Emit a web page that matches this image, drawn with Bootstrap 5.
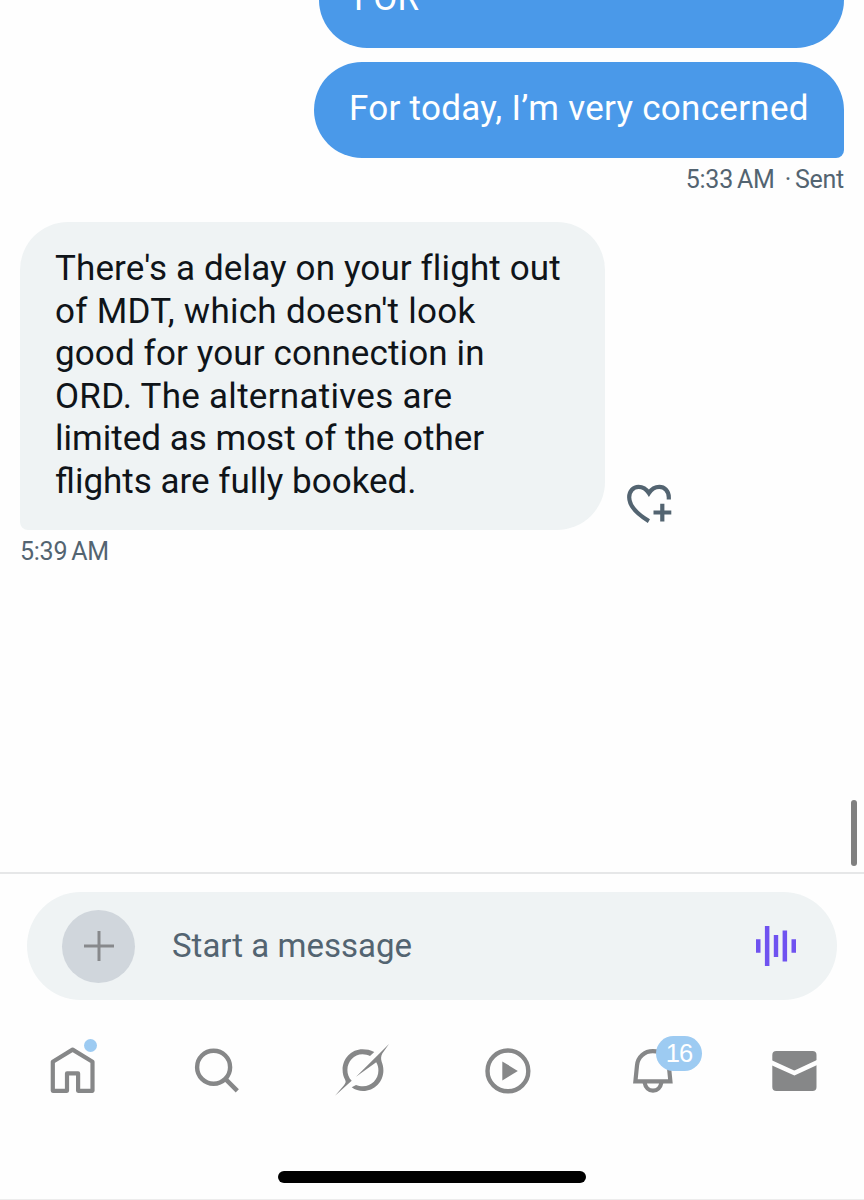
<!DOCTYPE html>
<html lang="en">
<head>
<meta charset="utf-8">
<meta name="viewport" content="width=device-width, initial-scale=1">
<title>Messages</title>
<link href="https://cdn.jsdelivr.net/npm/bootstrap@5.3.0/dist/css/bootstrap.min.css" rel="stylesheet">
<style>
  body { font-family: Roboto, "Liberation Sans", sans-serif; color: #0f1419; background: #fefefe; }
  .screen { width: 864px; height: 1200px; }
  .thread { height: 872px; padding: 0 20px; }
  .bubble { font-size: 35px; line-height: 42.55px; padding: 26px 35px 27.7px; border-radius: 48px; white-space: nowrap; }
  .bubble-out { background: #4a99e9; color: #fff; }
  .bubble-clipped { width: 525px; height: 96px; margin-top: -48px; }
  .bubble-last { width: 530px; height: 96px; margin-top: 14px; border-bottom-right-radius: 8px; }
  .bubble-in { width: 584.5px; height: 307.5px; background: #eff3f4; border-bottom-left-radius: 8px; }
  .ls-a { letter-spacing: .12px; }
  .ls-b { letter-spacing: .28px; }
  .stamp { font-size: 25px; line-height: 30px; color: #536471; letter-spacing: -.25px; }
  .stamp-out { margin-top: 7px; }
  .row-in { margin-top: 27px; gap: 16px; }
  .stamp-in { margin-top: 7px; }
  .scroll-thumb { right: 7px; bottom: 6px; width: 6.5px; height: 66px; background: #808080; }
  .composer { height: 127px; padding: 18px 27px 0; border-top: 2px solid #e6e7e8; }
  .entry { height: 108px; background: #eff3f4; padding: 0 41px 0 35px; }
  .add-btn { width: 73px; height: 73px; background: #d0d6dc; }
  .entry-hint { font-size: 33px; line-height: 40px; color: #536471; margin-left: 37px; }
  .tabs { height: 112px; padding-top: 31px; }
  .tabs svg { width: 144px; height: 80px; display: block; }
  .tab-badge { left: 8px; top: 6px; width: 46px; height: 35px; background: #9dcbf2; color: #fff; font: 25.5px/35px "Liberation Sans", sans-serif; letter-spacing: -1px; }
  .tab-dot { left: 83.5px; top: 8.5px; width: 13px; height: 13px; background: #9dcbf2; }
  .home-bar { width: 308px; height: 11.5px; background: #000; margin: 60px auto 0; }
  .page-end { height: 1px; background: #ececec; }
</style>
</head>
<body>
<div class="screen d-flex flex-column overflow-hidden">
  <main class="thread position-relative flex-shrink-0">
    <div class="d-flex flex-column align-items-end">
      <div class="bubble bubble-out bubble-clipped">FOR</div>
      <div class="bubble bubble-out bubble-last ls-b">For today, I’m very concerned</div>
      <div class="stamp stamp-out d-flex"><span>5:33</span><span class="ms-1">AM</span><span style="margin-left:10px">·</span><span class="ms-1">Sent</span></div>
    </div>
    <div class="row-in d-flex align-items-end">
      <div class="bubble bubble-in">
        <div class="ls-a">There's a delay on your flight out</div>
        <div class="ls-b">of MDT, which doesn't look</div>
        <div class="ls-a">good for your connection in</div>
        <div class="ls-b">ORD. The alternatives are</div>
        <div>limited as most of the other</div>
        <div>flights are fully booked.</div>
      </div>
      <svg width="60" height="60" viewBox="620.5 469.5 60 60" fill="none" stroke="#536471" stroke-width="4.2" aria-label="React">
        <path d="M648.4 520.6C635 512.5 628.7 504.5 628.7 496.8C628.7 490.5 632.8 486.4 638 486.4C642.4 486.4 645.8 488.6 648.4 492.6C651 488.6 654.4 486.4 658.8 486.4C664 486.4 668.3 490.5 668.3 496.8V499"/>
        <path d="M653 512H670.8M661.8 503.2V521"/>
      </svg>
    </div>
    <div class="stamp stamp-in d-flex"><span>5:39</span><span class="ms-1">AM</span></div>
    <div class="scroll-thumb position-absolute rounded-pill"></div>
  </main>

  <section class="composer flex-shrink-0">
    <div class="entry rounded-pill d-flex align-items-center">
      <div class="add-btn rounded-circle d-flex align-items-center justify-content-center">
        <svg width="30" height="30" viewBox="0 0 30 30" stroke="#87898c" stroke-width="3"><path d="M0 15H30M15 0V30"/></svg>
      </div>
      <span class="entry-hint">Start a message</span>
      <svg class="ms-auto" width="40" height="40" viewBox="0 0 40 40" fill="#6f52f0" aria-label="Voice message">
        <path d="M0 13.3h4.5v13.4H0zM8.9 0h4.5v40H8.9zM17.8 8.9h4.4v22.2h-4.4zM26.6 4.5h4.5v31h-4.5zM35.5 13.3H40v13.4h-4.5z"/>
      </svg>
    </div>
  </section>

  <nav class="tabs d-flex flex-shrink-0">
    <div class="position-relative">
      <svg viewBox="0 1030 144 80" fill="none" stroke="#868788" stroke-width="4.2"><path stroke-linejoin="round" d="M52.8 1061.7L72.6 1049.6L92.5 1061.7V1090.8H78.1V1073.4H67V1090.8H52.8Z"/></svg>
      <span class="tab-dot position-absolute rounded-circle"></span>
    </div>
    <div>
      <svg viewBox="144 1030 144 80" fill="none" stroke="#868788" stroke-width="4.4"><circle cx="213.6" cy="1067.2" r="16.5"/><path d="M225.3 1078.9L237.3 1090.9"/></svg>
    </div>
    <div>
      <svg viewBox="288 1030 144 80" fill="#868788">
        <path d="M374.3 1052C370.5 1050 366.5 1049.3 362.5 1049.3C351.5 1049.3 342.6 1058.5 342.6 1069.8C342.6 1074 343.6 1077 345 1079.5C346.3 1082 345.5 1083.2 344 1085.2L335 1095.7L351.7 1080.7C348.8 1078 347.4 1074 347.4 1070C347.4 1061.5 354 1054.3 362.5 1054.3C365.3 1054.3 367.8 1055 370 1056Z"/>
        <path d="M389 1044L356 1076.7L376.2 1062.2C377.8 1064.6 378.4 1067.5 378.4 1070.5C378.4 1079.2 371.5 1086.3 363 1086.3C360.5 1086.3 358 1085.8 356 1084.9L351.7 1087.3C355 1089.8 359 1091 363 1091C374.5 1091 383.4 1081.8 383.4 1070.5C383.4 1067 382.7 1064.5 381.7 1061.8C380.7 1059 380.9 1056 382.3 1053.6Z"/>
      </svg>
    </div>
    <div>
      <svg viewBox="432 1030 144 80"><circle cx="507.9" cy="1070.9" r="20.4" fill="none" stroke="#868788" stroke-width="4.4"/><path fill="#868788" d="M502.3 1061.4L517.8 1070.9L502.3 1080.4Z"/></svg>
    </div>
    <div class="position-relative">
      <svg viewBox="576 1030 144 80" fill="none" stroke="#868788" stroke-width="4.2"><path d="M635.4 1081.3H670.4L668.8 1065.5C668 1057 661.3 1051.2 652.9 1051.2C644.5 1051.2 637.8 1057 637 1065.5Z"/><path d="M644.6 1082.5C645.4 1087.5 648.8 1090.7 653 1090.7C657.2 1090.7 660.6 1087.5 661.4 1082.5"/></svg>
      <span class="tab-badge position-absolute rounded-pill text-center" style="left:80px">16</span>
    </div>
    <div>
      <svg viewBox="720 1030 144 80"><rect x="772.3" y="1051" width="44.2" height="40" rx="4" fill="#868788"/><path d="M768 1061.2L794.4 1073L820 1061.2" fill="none" stroke="#fefefe" stroke-width="4.6"/></svg>
    </div>
  </nav>
  <div class="home-bar rounded-pill flex-shrink-0"></div>
  <div class="page-end mt-auto flex-shrink-0"></div>
</div>
<script src="https://cdn.jsdelivr.net/npm/bootstrap@5.3.0/dist/js/bootstrap.bundle.min.js"></script>
</body>
</html>
